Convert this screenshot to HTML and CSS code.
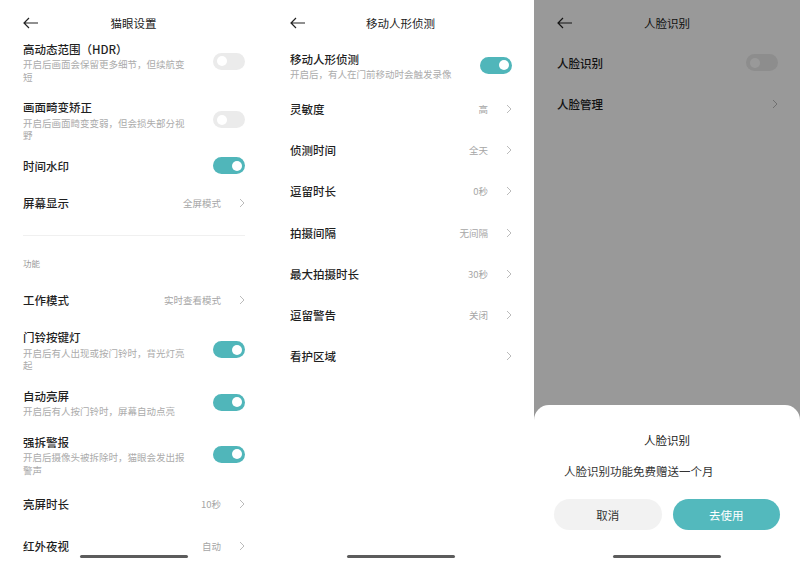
FILE: index.html
```html
<!DOCTYPE html>
<html lang="zh-CN">

<head>
    <meta charset="UTF-8">
    <meta name="viewport" content="width=device-width, initial-scale=1.0">
    <title>猫眼设置</title>
    <link rel="stylesheet" href="styles.css">
</head>

<body>
    <div class="screens">

        <!-- 猫眼设置 -->
        <section class="screen">
            <header class="topbar">
                <svg class="back" width="16" height="12" viewBox="0 0 16 12"><path d="M1 6H15M6 1L1 6L6 11" fill="none" stroke="#222" stroke-width="1.2"/></svg>
                <h1>猫眼设置</h1>
            </header>
            <div class="list list-scrolled">
                <div class="row">
                    <div class="row-text">
                        <p class="row-title">高动态范围（HDR）</p>
                        <p class="row-desc">开启后画面会保留更多细节，但续航变短</p>
                    </div>
                    <span class="switch"></span>
                </div>
                <div class="row">
                    <div class="row-text">
                        <p class="row-title">画面畸变矫正</p>
                        <p class="row-desc">开启后画面畸变变弱，但会损失部分视野</p>
                    </div>
                    <span class="switch"></span>
                </div>
                <div class="row">
                    <p class="row-title">时间水印</p>
                    <span class="switch on"></span>
                </div>
                <div class="row tall">
                    <p class="row-title">屏幕显示</p>
                    <div class="row-end"><span class="row-value">全屏模式</span><svg class="chev" width="6" height="10" viewBox="0 0 6 10"><path d="M1 1L5 5L1 9" fill="none" stroke="#bbb"/></svg></div>
                </div>

                <hr class="divider">
                <p class="group-label">功能</p>

                <div class="row tall">
                    <p class="row-title">工作模式</p>
                    <div class="row-end"><span class="row-value">实时查看模式</span><svg class="chev" width="6" height="10" viewBox="0 0 6 10"><path d="M1 1L5 5L1 9" fill="none" stroke="#bbb"/></svg></div>
                </div>
                <div class="row">
                    <div class="row-text">
                        <p class="row-title">门铃按键灯</p>
                        <p class="row-desc">开启后有人出现或按门铃时，背光灯亮起</p>
                    </div>
                    <span class="switch on"></span>
                </div>
                <div class="row">
                    <div class="row-text">
                        <p class="row-title">自动亮屏</p>
                        <p class="row-desc">开启后有人按门铃时，屏幕自动点亮</p>
                    </div>
                    <span class="switch on"></span>
                </div>
                <div class="row">
                    <div class="row-text">
                        <p class="row-title">强拆警报</p>
                        <p class="row-desc">开启后摄像头被拆除时，猫眼会发出报警声</p>
                    </div>
                    <span class="switch on"></span>
                </div>
                <div class="row tall">
                    <p class="row-title">亮屏时长</p>
                    <div class="row-end"><span class="row-value">10秒</span><svg class="chev" width="6" height="10" viewBox="0 0 6 10"><path d="M1 1L5 5L1 9" fill="none" stroke="#bbb"/></svg></div>
                </div>
                <div class="row tall">
                    <p class="row-title">红外夜视</p>
                    <div class="row-end"><span class="row-value">自动</span><svg class="chev" width="6" height="10" viewBox="0 0 6 10"><path d="M1 1L5 5L1 9" fill="none" stroke="#bbb"/></svg></div>
                </div>
            </div>
            <div class="home-bar"></div>
        </section>

        <!-- 移动人形侦测 -->
        <section class="screen">
            <header class="topbar">
                <svg class="back" width="16" height="12" viewBox="0 0 16 12"><path d="M1 6H15M6 1L1 6L6 11" fill="none" stroke="#222" stroke-width="1.2"/></svg>
                <h1>移动人形侦测</h1>
            </header>
            <div class="list">
                <div class="row">
                    <div class="row-text">
                        <p class="row-title">移动人形侦测</p>
                        <p class="row-desc">开启后，有人在门前移动时会触发录像</p>
                    </div>
                    <span class="switch on"></span>
                </div>
                <div class="row tall">
                    <p class="row-title">灵敏度</p>
                    <div class="row-end"><span class="row-value">高</span><svg class="chev" width="6" height="10" viewBox="0 0 6 10"><path d="M1 1L5 5L1 9" fill="none" stroke="#bbb"/></svg></div>
                </div>
                <div class="row tall">
                    <p class="row-title">侦测时间</p>
                    <div class="row-end"><span class="row-value">全天</span><svg class="chev" width="6" height="10" viewBox="0 0 6 10"><path d="M1 1L5 5L1 9" fill="none" stroke="#bbb"/></svg></div>
                </div>
                <div class="row tall">
                    <p class="row-title">逗留时长</p>
                    <div class="row-end"><span class="row-value">0秒</span><svg class="chev" width="6" height="10" viewBox="0 0 6 10"><path d="M1 1L5 5L1 9" fill="none" stroke="#bbb"/></svg></div>
                </div>
                <div class="row tall">
                    <p class="row-title">拍摄间隔</p>
                    <div class="row-end"><span class="row-value">无间隔</span><svg class="chev" width="6" height="10" viewBox="0 0 6 10"><path d="M1 1L5 5L1 9" fill="none" stroke="#bbb"/></svg></div>
                </div>
                <div class="row tall">
                    <p class="row-title">最大拍摄时长</p>
                    <div class="row-end"><span class="row-value">30秒</span><svg class="chev" width="6" height="10" viewBox="0 0 6 10"><path d="M1 1L5 5L1 9" fill="none" stroke="#bbb"/></svg></div>
                </div>
                <div class="row tall">
                    <p class="row-title">逗留警告</p>
                    <div class="row-end"><span class="row-value">关闭</span><svg class="chev" width="6" height="10" viewBox="0 0 6 10"><path d="M1 1L5 5L1 9" fill="none" stroke="#bbb"/></svg></div>
                </div>
                <div class="row tall">
                    <p class="row-title">看护区域</p>
                    <div class="row-end"><svg class="chev" width="6" height="10" viewBox="0 0 6 10"><path d="M1 1L5 5L1 9" fill="none" stroke="#bbb"/></svg></div>
                </div>
            </div>
            <div class="home-bar"></div>
        </section>

        <!-- 人脸识别 + 弹窗 -->
        <section class="screen screen-last">
            <header class="topbar">
                <svg class="back" width="16" height="12" viewBox="0 0 16 12"><path d="M1 6H15M6 1L1 6L6 11" fill="none" stroke="#222" stroke-width="1.2"/></svg>
                <h1>人脸识别</h1>
            </header>
            <div class="list">
                <div class="row tall">
                    <p class="row-title">人脸识别</p>
                    <span class="switch"></span>
                </div>
                <div class="row tall">
                    <p class="row-title">人脸管理</p>
                    <div class="row-end"><svg class="chev" width="6" height="10" viewBox="0 0 6 10"><path d="M1 1L5 5L1 9" fill="none" stroke="#bbb"/></svg></div>
                </div>
            </div>

            <div class="mask"></div>
            <div class="sheet">
                <h2 class="sheet-title">人脸识别</h2>
                <p class="sheet-text">人脸识别功能免费赠送一个月</p>
                <div class="sheet-buttons">
                    <button class="btn btn-cancel">取消</button>
                    <button class="btn btn-ok">去使用</button>
                </div>
            </div>
            <div class="home-bar"></div>
        </section>

    </div>
</body>

</html>
```

FILE: styles.css
```css
* {
    margin: 0;
    padding: 0;
    box-sizing: border-box;
    font-family: "Noto Sans CJK SC", "Noto Sans", sans-serif;
}

body {
    width: 800px;
    height: 566px;
    overflow: hidden;
    background: #fff;
    color: #1f1f1f;
}

.screens {
    display: flex;
    height: 566px;
}

.screen {
    position: relative;
    width: 267px;
    height: 566px;
    overflow: hidden;
    background: #fff;
}

.screen-last {
    width: 266px;
}

/* top bar */
.topbar {
    display: grid;
    grid-template-columns: 30px 1fr 30px;
    align-items: center;
    height: 32px;
    padding: 14px 23px 0;
}

.back {
    display: block;
}

.topbar h1 {
    grid-column: 2;
    text-align: center;
    font-size: 11.5px;
    line-height: 18px;
    font-weight: 400;
    color: #222;
}

/* list rows */
.list {
    padding-top: 10px;
}

.list-scrolled {
    padding-top: 0;
}

.row {
    display: flex;
    align-items: center;
    justify-content: space-between;
    padding: 7.5px 22px 7.5px 23px;
}

.row.tall {
    height: 41.3px;
    padding-top: 0;
    padding-bottom: 0;
}

.row-title {
    font-size: 11.5px;
    line-height: 18px;
    font-weight: 500;
    color: #1f1f1f;
}

.row-desc {
    max-width: 165px;
    margin-top: 0.5px;
    font-size: 9.5px;
    line-height: 12.5px;
    color: #ababab;
}

.row-end {
    display: flex;
    align-items: center;
}

.row-value {
    margin-right: 18px;
    font-size: 9.5px;
    color: #a6a6a6;
}

.chev {
    display: block;
}

.divider {
    margin: 12px 22px 0 23px;
    border: none;
    border-top: 1px solid #f0f0f0;
}

.group-label {
    margin: 21px 23px 10px;
    font-size: 8.5px;
    line-height: 12px;
    color: #9a9a9a;
}

/* switch */
.switch {
    position: relative;
    flex-shrink: 0;
    width: 32px;
    height: 17px;
    border-radius: 9px;
    background: #ebebeb;
}

.switch::after {
    content: "";
    position: absolute;
    top: 3.5px;
    left: 4px;
    width: 10px;
    height: 10px;
    border-radius: 50%;
    background: #fff;
}

.switch.on {
    background: #50b6ba;
}

.switch.on::after {
    left: auto;
    right: 3.5px;
}

.home-bar {
    position: absolute;
    left: 50%;
    bottom: 8px;
    width: 108px;
    height: 3px;
    margin-left: -54px;
    border-radius: 2px;
    background: #5c5c5c;
}

/* dialog */
.mask {
    position: absolute;
    top: 0;
    left: 0;
    right: 0;
    bottom: 0;
    background: rgba(0, 0, 0, 0.4);
}

.sheet {
    position: absolute;
    left: 0;
    right: 0;
    bottom: 0;
    height: 161px;
    padding: 26px 20px 0;
    background: #fff;
    border-radius: 15px 15px 0 0;
}

.sheet-title {
    text-align: center;
    font-size: 11.5px;
    line-height: 18px;
    font-weight: 400;
    color: #222;
}

.sheet-text {
    margin-top: 13px;
    padding-left: 10px;
    font-size: 11.5px;
    line-height: 18px;
    color: #333;
}

.sheet-buttons {
    display: grid;
    grid-template-columns: 1fr 1fr;
    gap: 11px;
    margin-top: 19px;
}

.btn {
    height: 31px;
    border: none;
    border-radius: 16px;
    font-size: 11.5px;
    cursor: pointer;
}

.btn-cancel {
    background: #f2f2f2;
    color: #333;
}

.btn-ok {
    background: #53b9bd;
    color: #fff;
}
```
